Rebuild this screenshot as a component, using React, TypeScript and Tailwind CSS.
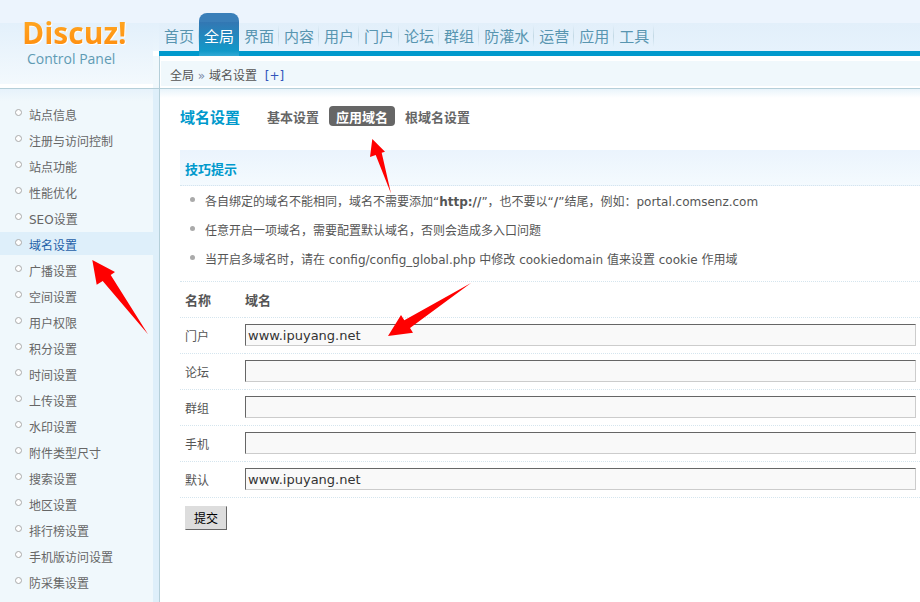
const navItems = ['首页', '全局', '界面', '内容', '用户', '门户', '论坛', '群组', '防灌水', '运营', '应用', '工具'];

const menuItems = [
  '站点信息', '注册与访问控制', '站点功能', '性能优化', 'SEO设置', '域名设置', '广播设置',
  '空间设置', '用户权限', '积分设置', '时间设置', '上传设置', '水印设置', '附件类型尺寸',
  '搜索设置', '地区设置', '排行榜设置', '手机版访问设置', '防采集设置',
];

const domains = [
  { id: 'portal', label: '门户', value: 'www.ipuyang.net' },
  { id: 'forum', label: '论坛', value: '' },
  { id: 'group', label: '群组', value: '' },
  { id: 'mobile', label: '手机', value: '' },
  { id: 'default', label: '默认', value: 'www.ipuyang.net' },
];

function Logo() {
  return (
    <div className="w-[153px] shrink-0 bg-[linear-gradient(#ecf4fd_23px,#e3f0fb_23px,#f3f9fd_84px,#fff_84px)] pt-[14px] pl-[22px] font-['Open_Sans',sans-serif]">
      <div className="bg-linear-to-b from-[#ffab24] to-[#ff8a0a] bg-clip-text text-[30px] leading-[38px] font-bold text-transparent drop-shadow-[1px_1px_0_#fff]">
        Discuz!
      </div>
      <div className="pl-[5px] text-[14px] leading-[14px] text-[#5f9bb4]">Control Panel</div>
    </div>
  );
}

function TopNav() {
  return (
    <nav className="h-14 border-b-5 border-[#0099cc] bg-[linear-gradient(#ecf4fd_23px,#e2effa_23px,#e6f2fc)]">
      <ul className="flex pt-[13px]">
        {navItems.map((item) => (
          <li key={item}>
            {item === '全局' ? (
              <a
                href="#"
                className="block h-[43px] rounded-t-lg bg-[linear-gradient(#3a7fb9_9px,#3377b3_9px,#1199c9_38px,#33aad5)] px-[5px] pt-3 text-[15px] leading-[24px] text-white"
              >
                {item}
              </a>
            ) : (
              <a
                href="#"
                className="block h-[38px] bg-[linear-gradient(transparent,#c3d9e5,transparent)] bg-[length:1px_22px] bg-[position:right_12px] bg-no-repeat px-[5px] pt-3 text-[15px] leading-[24px] text-[#5895b0]"
              >
                {item}
              </a>
            )}
          </li>
        ))}
      </ul>
    </nav>
  );
}

function SideMenu() {
  return (
    <nav className="w-[159px] shrink-0 border-r-6 border-[#deeffa] bg-[linear-gradient(#e6f2fb,#f0f8fc_12px)] pt-[13px]">
      <ul className="flex flex-col gap-[3px]">
        {menuItems.map((item) => {
          const active = item === '域名设置';
          return (
            <li key={item} className={active ? 'bg-[#deeffa]' : ''}>
              <a href="#" className={`flex h-[23px] pl-[15px] leading-[28px] ${active ? 'text-[#1f5fa8]' : 'text-[#666]'}`}>
                <span className="mt-[7px] mr-[7px] h-[7px] w-[7px] rounded-full border border-[#aaa] bg-white" />
                {item}
              </a>
            </li>
          );
        })}
      </ul>
    </nav>
  );
}

function Dot() {
  return <span className="mt-[9px] mr-[10px] h-[5px] w-[5px] shrink-0 rounded-full bg-[#aaa]" />;
}

function Tips() {
  return (
    <section>
      <h4 className="h-9 border-b border-dotted border-[#d5e5ee] bg-linear-to-b from-[#ebf4fd] to-[#f4fafe] pl-[5px] text-[13px] leading-[40px] font-bold text-[#0099cc]">
        技巧提示
      </h4>
      <ul className="border-b border-dotted border-[#d5e5ee] pt-[2px] pb-[6px] leading-[29px]">
        <li className="flex pl-[10px]">
          <Dot />
          <span>各自绑定的域名不能相同，域名不需要添加“<b>http://</b>”，也不要以“<b>/</b>”结尾，例如：portal.comsenz.com</span>
        </li>
        <li className="flex pl-[10px]">
          <Dot />
          <span>任意开启一项域名，需要配置默认域名，否则会造成多入口问题</span>
        </li>
        <li className="flex pl-[10px]">
          <Dot />
          <span>当开启多域名时，请在 config/config_global.php 中修改 cookiedomain 值来设置 cookie 作用域</span>
        </li>
      </ul>
    </section>
  );
}

function DomainForm() {
  return (
    <form onSubmit={(e) => e.preventDefault()}>
      <table className="w-full table-fixed border-separate border-spacing-0 text-left">
        <thead>
          <tr className="h-9 text-[13px]">
            <th className="w-[65px] border-b border-dotted border-[#d5e5ee] pt-[2px] pl-[5px] font-bold">名称</th>
            <th className="border-b border-dotted border-[#d5e5ee] pt-[2px] font-bold">域名</th>
          </tr>
        </thead>
        <tbody>
          {domains.map((d) => (
            <tr key={d.id} className="h-9">
              <td className="border-b border-dotted border-[#d5e5ee] pt-[2px] pl-[5px]">
                <label htmlFor={d.id}>{d.label}</label>
              </td>
              <td className="border-b border-dotted border-[#d5e5ee] pr-1 pb-px">
                <input
                  id={d.id}
                  type="text"
                  defaultValue={d.value}
                  className="block h-[22px] w-full border border-t-[#666] border-r-[#ccc] border-b-[#ccc] border-l-[#666] bg-[#f9f9f9] px-[2px] pt-px text-[13px] text-[#333]"
                />
              </td>
            </tr>
          ))}
        </tbody>
      </table>
      <button
        type="submit"
        className="mt-2 ml-[5px] block h-6 border border-t-[#ddd] border-r-[#666] border-b-[#666] border-l-[#ddd] bg-[#ddd] px-2 pt-px text-black"
      >
        提交
      </button>
    </form>
  );
}

function Arrows() {
  return (
    <svg className="pointer-events-none absolute top-0 left-0" width="480" height="340" fill="#f00" aria-hidden="true">
      <path d="M372.3 139 385 151.7 381.7 152.7 391 193.5 375.7 155 370 157Z" />
      <path d="M92.3 260 115 272 110.7 275 148 334.3 102.7 281 96.7 284.7Z" />
      <path d="M388 336 401 315 404.3 320.3 471 283 410 328 413 332.7Z" />
    </svg>
  );
}

export default function App() {
  return (
    <div className="relative flex min-h-screen flex-col bg-white font-['DejaVu_Sans','Noto_Sans_CJK_SC',sans-serif] text-[12px] text-[#555]">
      <header className="flex h-[89px] border-b border-[#b5cfd9]">
        <Logo />
        <div className="flex w-[6px] shrink-0 flex-col">
          <div className="h-[51px] bg-[linear-gradient(#ecf4fd_23px,#e3f0fb_23px,#ebf5fc)]" />
          <div className="h-[5px] bg-white" />
          <div className="flex-1 bg-[#f0f8fc]" />
        </div>
        <div className="min-w-0 flex-1">
          <TopNav />
          <div className="h-8 border-l border-[#b5cfd9] pt-[5px] pb-[2px] pl-px">
            <div className="h-full bg-[#f0f8fc] pl-[9px] leading-[30px]">
              全局 <span className="text-[#7a8ba8]">»</span> 域名设置{' '}
              <a href="#" className="ml-1 text-[#3355bb]">[+]</a>
            </div>
          </div>
        </div>
      </header>
      <div className="flex flex-1">
        <SideMenu />
        <main className="min-w-0 flex-1 border-l border-[#b5cfd9] bg-[linear-gradient(#e9f4fb,#fff_9px)] pl-5">
          <div className="flex h-[61px] items-start pt-[17px]">
            <h3 className="mr-[17px] text-[15px] leading-[24px] font-bold text-[#0099cc]">域名设置</h3>
            <ul className="flex text-[13px] leading-[24px] font-bold text-[#666]">
              <li><a href="#" className="block px-[10px]">基本设置</a></li>
              <li><a href="#" className="block h-5 rounded-sm bg-[#666] px-[7px] text-white">应用域名</a></li>
              <li><a href="#" className="block px-[10px]">根域名设置</a></li>
            </ul>
          </div>
          <Tips />
          <DomainForm />
        </main>
      </div>
      <Arrows />
    </div>
  );
}
